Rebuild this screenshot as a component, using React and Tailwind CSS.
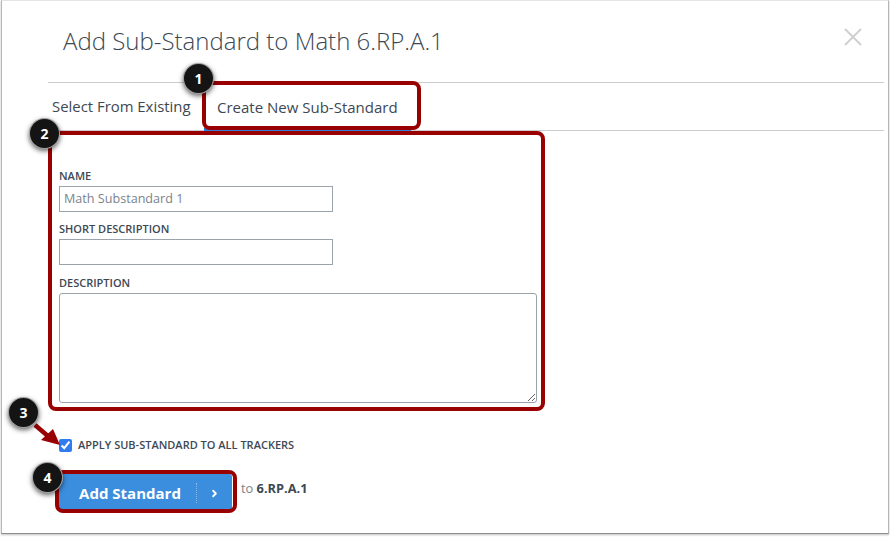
import React from "react";
import { ChevronRight } from "lucide-react";

const Callout = ({ n, className }) => {
  return (
    <div
      className={
        "absolute w-[31px] h-[31px] rounded-full bg-[#141414] text-white text-[14px] font-bold flex items-center justify-center shadow-[0_2px_5px_rgba(0,0,0,0.6)] border border-white/60 " +
        className
      }
    >
      {n}
    </div>
  );
};

const Field = ({ label, value, className }) => {
  return (
    <div className={className}>
      <label className="block text-[11px] leading-[15px] font-semibold text-[#3d4853] uppercase">
        {label}
      </label>
      <input
        readOnly
        value={value}
        className="block mt-[3px] w-[274px] h-[26px] border border-[#9aa3ab] px-[4px] pb-[2px] text-[12.6px] text-[#7b838b] outline-none"
      />
    </div>
  );
};

export default function App() {
  return (
    <div className="relative w-[890px] h-[537px] bg-white font-['Open_Sans',sans-serif] overflow-hidden">
      <div className="w-[888px] h-[534px] ml-[1px] border-x border-b border-t border-x-[#b5b5b5] border-b-[#8f8f8f] border-t-[#e4e4e4] pl-[46px] pr-[4px] shadow-[0_1px_2px_rgba(0,0,0,0.25)]">
        <div className="h-[82px] border-b border-[#cccccc] flex items-center justify-between pb-[1px]">
          <h1 className="ml-[15px] text-[24px] font-light text-[#3d4853]">
            Add Sub-Standard to Math 6.RP.A.1
          </h1>
          <svg width="18" height="18" viewBox="0 0 18 18" className="mr-[22px] mb-[8px]">
            <path d="M1 1 L17 17 M17 1 L1 17" stroke="#cfcfcf" strokeWidth="1.8" fill="none" />
          </svg>
        </div>

        <div className="h-[48px] flex border-b border-[#cccccc] items-stretch">
          <div className="ml-[4px] w-[152px] flex items-center text-[14.9px] text-[#3d4853]">
            Select From Existing
          </div>
          <div className="w-[207px] pl-[13px] pt-[3px] flex items-center text-[15px] text-[#3d4853] border-b-[3px] border-[#2f7fd6] -mb-[1px]">
            Create New Sub-Standard
          </div>
        </div>

        <div className="pl-[11px] pt-[37px]">
          <Field label="Name" value="Math Substandard 1" />
          <Field label="Short Description" value="" className="mt-[9px]" />
          <label className="block mt-[10px] text-[11px] leading-[15px] font-semibold text-[#3d4853] uppercase">
            Description
          </label>
          <textarea
            readOnly
            className="block mt-[3px] w-[478px] h-[110px] border border-[#9aa3ab] rounded-[3px] outline-none"
          />
          <div className="flex items-center mt-[34px] h-[16px]">
            <input type="checkbox" readOnly checked className="w-[13px] h-[13px] accent-[#2f7bf0]" />
            <span className="ml-[6px] mt-[1px] text-[11px] font-semibold text-[#3d4853] uppercase">
              Apply Sub-Standard to All Trackers
            </span>
          </div>
          <div className="flex items-center mt-[21px]">
            <button className="w-[173px] h-[38px] rounded-[3px] bg-[#3b8dde] text-white flex items-center">
              <span className="w-[137px] pl-[5px] text-center text-[15px] font-bold">Add Standard</span>
              <span className="h-[20px] border-l border-dotted border-white/40 w-[36px] flex items-center justify-center">
                <ChevronRight size={11} strokeWidth={4} />
              </span>
            </button>
            <span className="ml-[9px] mb-[9px] text-[12.8px] text-[#7b838b]">
              to <b className="font-bold text-[#3d4853]">6.RP.A.1</b>
            </span>
          </div>
        </div>
      </div>

      <div className="absolute left-[202px] top-[81px] w-[219px] h-[49px] border-[4px] border-[#990000] rounded-[8px]" />
      <div className="absolute left-[48px] top-[131px] w-[497px] h-[280px] border-[4px] border-[#990000] rounded-[8px]" />
      <div className="absolute left-[55px] top-[470px] w-[182px] h-[43px] border-[4px] border-[#990000] rounded-[8px]" />

      <svg className="absolute left-[30px] top-[420px]" width="32" height="32" viewBox="0 0 32 32">
        <path d="M5 5 L19 17" stroke="#990000" strokeWidth="4.5" fill="none" />
        <path d="M30 25 L11 20 L23 9 Z" fill="#990000" />
      </svg>

      <Callout n="1" className="left-[183px] top-[63px]" />
      <Callout n="2" className="left-[29px] top-[118px]" />
      <Callout n="3" className="left-[8px] top-[397px]" />
      <Callout n="4" className="left-[32px] top-[462px]" />
    </div>
  );
}
